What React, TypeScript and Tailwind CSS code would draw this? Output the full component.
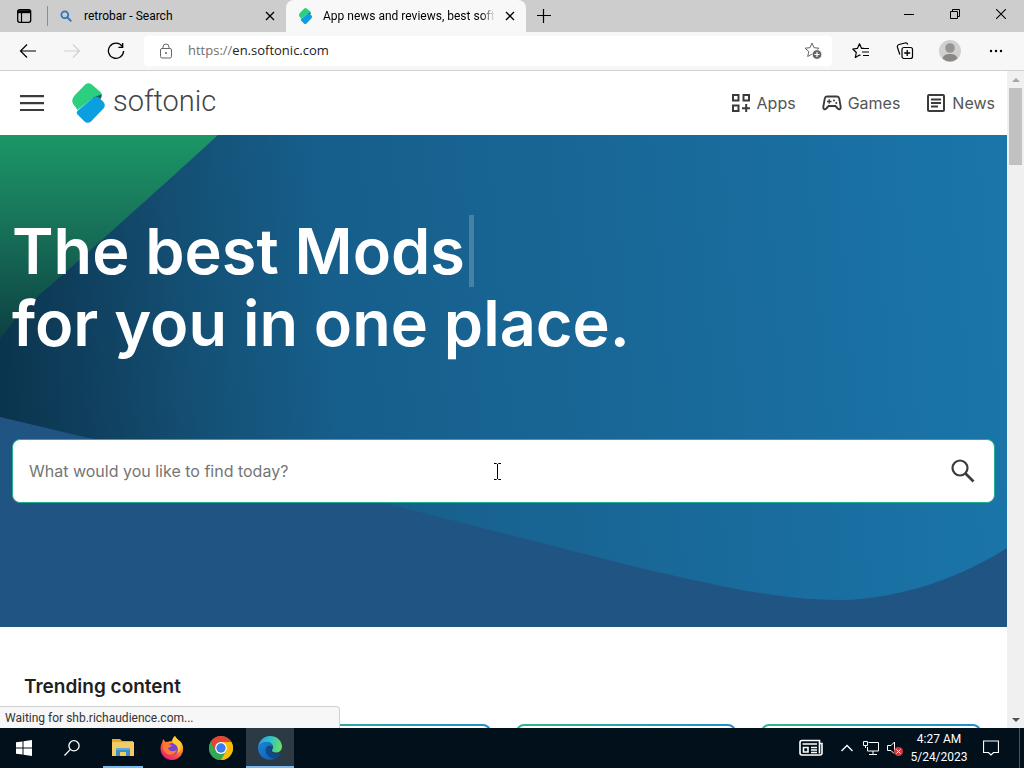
import type { ReactNode } from "react";

type IconProps = { children: ReactNode; w?: number; h?: number; className?: string };

function Icon({ children, w = 16, h = 16, className = "" }: IconProps) {
  return (
    <svg
      width={w}
      height={h}
      viewBox={`0 0 ${w} ${h}`}
      fill="none"
      stroke="currentColor"
      className={`block shrink-0 ${className}`}
      aria-hidden="true"
    >
      {children}
    </svg>
  );
}

function SoftonicMark({ w, h }: { w: number; h: number }) {
  return (
    <svg width={w} height={h} viewBox="0 0 33 40" className="block shrink-0" aria-hidden="true">
      <path d="M13.500 1.300Q16.500-.8 19.500 1.300L28.500 9Q30.500 11 29 13L22.500 14 5.500 27 1.500 21.500Q-1 18 1.300 14.500Q2 13 3.500 11.500Z" fill="#2bcf7d" />
      <path d="M21 14.500 29.700 11.200Q30.300 13.500 28 16.500L24 17.500Z" fill="#17645b" />
      <path d="M21.500 14.500Q24.500 12.800 27.500 15L31.500 19Q34 22 31.500 25.500L19 38.500Q15.500 41 12.500 38.500L5.500 31.500Q4 29.500 5.500 27.700Z" fill="#0aa0e0" />
    </svg>
  );
}

function TabClose({ label }: { label: string }) {
  return (
    <button type="button" aria-label={label} className="flex h-6 w-6 shrink-0 items-center justify-center">
      <Icon w={10} h={10}>
        <path d="M1 1 9 9M9 1 1 9" strokeWidth="1.300" />
      </Icon>
    </button>
  );
}

function TabStrip() {
  return (
    <div className="flex h-8 shrink-0 items-stretch bg-[#cdcdcd] font-['Roboto','Open_Sans',sans-serif] text-black">
      <button type="button" aria-label="Tab actions" className="flex w-[47px] items-center justify-center">
        <Icon>
          <rect x="1.700" y="1.700" width="13" height="12.600" rx="2" strokeWidth="1.300" />
          <path d="M1.700 3.700h13" strokeWidth="3" />
          <path d="M5.500 5v9" strokeWidth="1.200" />
        </Icon>
      </button>
      <div className="my-1.5 w-px bg-[#8c8c8c]" />
      <div className="flex w-[238px] items-center pl-3">
        <button type="button" className="flex min-w-0 flex-1 items-center gap-3">
          <Icon w={12} h={12} className="text-[#2f74c0]">
            <circle cx="4.800" cy="4.800" r="3.400" strokeWidth="1.800" />
            <path d="m7.500 7.500 3.800 3.800" strokeWidth="1.900" />
          </Icon>
          <span className="truncate text-[12px]">retrobar - Search</span>
        </button>
        <TabClose label="Close retrobar tab" />
        <div className="w-1" />
      </div>
      <div className="flex w-[240px] items-center rounded-t-lg bg-[#f8f8f8] pl-3">
        <button type="button" className="flex min-w-0 flex-1 items-center gap-2.5">
          <SoftonicMark w={15} h={16} />
          <span className="text-left text-[12px] whitespace-nowrap [mask-image:linear-gradient(to_right,black_92%,transparent)]">
            App news and reviews, best soft
          </span>
        </button>
        <TabClose label="Close Softonic tab" />
        <div className="w-1" />
      </div>
      <button type="button" aria-label="New tab" className="flex w-9 items-center justify-center">
        <Icon>
          <path d="M1 7.500h14M7.500 1v14" strokeWidth="1.200" />
        </Icon>
      </button>
      <div className="flex-1" />
      <div className="flex pb-1">
        <button type="button" aria-label="Minimize" className="flex w-[46px] items-center justify-center">
          <Icon w={10} h={10}>
            <path d="M0 5.500h10" />
          </Icon>
        </button>
        <button type="button" aria-label="Restore" className="flex w-[46px] items-center justify-center">
          <Icon w={10} h={10}>
            <path d="M.5 2.500h7v7h-7zM2.500 2.500v-2h7v7h-2" />
          </Icon>
        </button>
        <button type="button" aria-label="Close window" className="flex w-[46px] items-center justify-center">
          <Icon w={10} h={10}>
            <path d="m0 0 10 10M10 0 0 10" strokeWidth="1.100" />
          </Icon>
        </button>
      </div>
    </div>
  );
}

const STAR = "m8 1 2 4.700 5 .5-3.800 3.300 1.100 5L8 12l-4.300 2.500 1.100-5L1 6.200l5-.5z";

function Toolbar() {
  return (
    <div className="flex h-[39px] shrink-0 items-center border-b border-[#d0d0d0] bg-[#f7f7f7] text-black">
      <div className="flex pl-1.5">
        <button type="button" aria-label="Back" className="flex h-8 w-11 items-center justify-center">
          <Icon w={18} h={16}>
            <path d="M17 8H1.500M8 1.500 1.500 8 8 14.500" strokeWidth="1.200" />
          </Icon>
        </button>
        <button type="button" aria-label="Forward" className="flex h-8 w-11 items-center justify-center text-[#d0d0d0]">
          <Icon w={18} h={16}>
            <path d="M1 8h15.500M10 1.500 16.500 8 10 14.500" strokeWidth="1.200" />
          </Icon>
        </button>
        <button type="button" aria-label="Refresh" className="flex h-8 w-11 items-center justify-center">
          <Icon w={18} h={18}>
            <path d="M15.300 4.500A7.600 7.600 0 1 0 16.600 9M15.700 1v4.300h-4.300" strokeWidth="1.300" />
          </Icon>
        </button>
      </div>
      <div className="ml-1.5 flex h-[30px] min-w-0 flex-1 items-center rounded bg-white pr-2.5 pl-3.5">
        <Icon className="text-[#666]">
          <rect x="2.500" y="5.500" width="11" height="9.500" rx="1.500" />
          <path d="M5 5.500V4a3 3 0 0 1 6 0v1.500" />
          <circle cx="8" cy="10" r=".6" fill="currentColor" />
        </Icon>
        <label htmlFor="address" className="pl-3.5 text-[13px] text-[#707070]">
          https://
        </label>
        <input
          id="address"
          aria-label="Address"
          defaultValue="en.softonic.com"
          className="min-w-0 flex-1 bg-transparent text-[13px] text-[#222] outline-none"
        />
        <button type="button" aria-label="Add to favorites" className="text-[#666]">
          <Icon w={18} h={18}>
            <path d={STAR} />
            <circle cx="13" cy="12.500" r="4.800" fill="#666" stroke="white" strokeWidth=".8" />
            <path d="M10.500 12.500h5M13 10v5" stroke="white" strokeWidth="1.200" />
          </Icon>
        </button>
      </div>
      <div className="flex pr-[5px] pl-[7px]">
        <button type="button" aria-label="Favorites" className="flex h-8 w-11 items-center justify-center">
          <Icon w={18} h={16}>
            <path d="M12 5.300 9.500 5.300 7.500.800 5.500 5.300.800 6l3.500 3.500-1 5L7.500 12l1 .5" strokeWidth="1.200" strokeLinejoin="round" />
            <path d="M11 5.500h6M10 9h7M11 12.500h6" strokeWidth="1.200" />
          </Icon>
        </button>
        <button type="button" aria-label="Collections" className="flex h-8 w-11 items-center justify-center">
          <Icon w={18} h={18}>
            <rect x="6" y="5.500" width="10.500" height="11" rx="2" strokeWidth="1.200" />
            <path d="M3.800 12.500 1.500 5.500C1 3.800 1.500 3 3 2.500L9 1c1.500-.4 2.300 0 2.800 1.500" strokeWidth="1.200" />
            <path d="M11.200 8v6M8.200 11h6" strokeWidth="1.300" />
          </Icon>
        </button>
        <button type="button" aria-label="Profile" className="flex h-8 w-[46px] items-center justify-center">
          <svg width="22" height="22" viewBox="0 0 22 22" aria-hidden="true">
            <circle cx="11" cy="11" r="11" fill="#d2d0ce" />
            <circle cx="11" cy="8" r="4.800" fill="#979593" />
            <path d="M3.500 18.500C4.500 15 7 14 11 14s6.500 1 7.500 4.500A11 11 0 0 1 3.500 18.500Z" fill="#8a8886" />
          </svg>
        </button>
        <button type="button" aria-label="Settings and more" className="flex h-8 w-[46px] items-center justify-center">
          <Icon w={14} h={4}>
            <g fill="currentColor" stroke="none">
              <circle cx="2" cy="2" r="1.200" />
              <circle cx="7" cy="2" r="1.200" />
              <circle cx="12" cy="2" r="1.200" />
            </g>
          </Icon>
        </button>
      </div>
    </div>
  );
}

function SiteHeader() {
  return (
    <header className="flex h-16 items-center bg-white px-3 font-['Inter',sans-serif] text-[16px] text-[#555]">
      <button type="button" aria-label="Menu" className="flex h-10 w-10 items-center justify-center text-[#3b3b3b]">
        <Icon w={24} h={16}>
          <path d="M0 0h24v2.200H0zM0 7h24v2.200H0zM0 14h24v2H0z" fill="currentColor" stroke="none" />
        </Icon>
      </button>
      <a href="#home" className="ml-5 flex items-center gap-2 text-[#444]">
        <SoftonicMark w={33} h={40} />
        <span className="pb-1 font-['Roboto',sans-serif] text-[29px] leading-8 font-light">softonic</span>
      </a>
      <nav className="ml-auto flex items-center gap-[26px]">
        <a href="#apps" className="flex items-center gap-1.5">
          <Icon w={20} h={20} className="text-[#3b3b3b]">
            <path d="M2 2h5.500v5.500H2zM12.500 2H18v5.500h-5.500zM2 12.500h5.500V18H2zM15.200 11v8M11 15.200h8" strokeWidth="2" />
          </Icon>
          Apps
        </a>
        <a href="#games" className="flex items-center gap-1.5">
          <Icon w={20} h={20} className="text-[#3b3b3b]">
            <path d="M5 3.500h10c1.200 0 2 .7 2.200 1.800l1.500 8.500c.3 2.500-1.500 3.200-3 1.700L13.500 13h-7l-2.200 2.500c-1.500 1.500-3.300.8-3-1.700l1.500-8.500C3 4.200 3.800 3.500 5 3.500Z" strokeWidth="1.900" />
            <path d="M5 8.500h4.500M7.200 6.200v4.600" strokeWidth="1.300" />
            <circle cx="12" cy="7.500" r="1" fill="currentColor" stroke="none" />
            <circle cx="14.300" cy="10" r="1" fill="currentColor" stroke="none" />
          </Icon>
          Games
        </a>
        <a href="#news" className="flex items-center gap-1.5">
          <Icon w={20} h={20} className="text-[#3b3b3b]">
            <rect x="2" y="2" width="16" height="16" rx="1" strokeWidth="2" />
            <path d="M5 6.500h10M5 10h10M5 13.500h7" strokeWidth="1.800" />
          </Icon>
          News
        </a>
      </nav>
    </header>
  );
}

function Hero() {
  return (
    <section className="relative bg-[#205483] px-3 pt-20 pb-[124px]">
      <svg
        className="absolute inset-0 h-full w-full"
        viewBox="0 0 1007 492"
        preserveAspectRatio="none"
        aria-hidden="true"
      >
        <defs>
          <linearGradient id="hero-green" x1="0" y1="0" x2="0" y2="1">
            <stop offset="0" stopColor="#1c9766" />
            <stop offset=".4" stopColor="#18765a" />
            <stop offset="1" stopColor="#0d4043" />
          </linearGradient>
          <linearGradient id="hero-blue" gradientUnits="userSpaceOnUse" x1="0" y1="280" x2="1007" y2="200">
            <stop offset="0" stopColor="#0b344d" />
            <stop offset=".08" stopColor="#0f3e5c" />
            <stop offset=".2" stopColor="#145075" />
            <stop offset=".33" stopColor="#165e8b" />
            <stop offset=".55" stopColor="#186594" />
            <stop offset="1" stopColor="#1a75a9" />
          </linearGradient>
        </defs>
        <path d="M0 0H1007V413C950 449 890 464 842 465C770 465 700 446 640 433L380 367L80 301L0 282Z" fill="url(#hero-blue)" />
        <path d="M0 0H218C150 62 80 125 45 155Q18 178 0 204Z" fill="url(#hero-green)" />
      </svg>
      <h1 className="relative font-['Inter',sans-serif] text-[63px] leading-[72px] font-semibold text-white">
        <span className="flex items-center gap-1">
          The best Mods
          <span className="h-[72px] w-[5px] bg-white/20" />
        </span>
        <span className="block">for you in one place.</span>
      </h1>
      <form
        onSubmit={(e) => e.preventDefault()}
        className="relative mt-20 flex h-16 items-center rounded-lg border border-[#20b08b] bg-white pr-[15px] pl-4 font-['Inter',sans-serif]"
      >
        <input
          type="search"
          aria-label="Search"
          placeholder="What would you like to find today?"
          className="h-full min-w-0 flex-1 bg-transparent text-[16px] text-[#333] outline-none placeholder:text-[#757575]"
        />
        <button type="submit" aria-label="Search" className="flex h-8 w-8 items-center justify-center text-[#3b3b3b]">
          <Icon w={24} h={24}>
            <circle cx="9" cy="9" r="7.500" strokeWidth="2.200" />
            <path d="m14.500 14.500 8 8" strokeWidth="2.600" />
          </Icon>
        </button>
      </form>
    </section>
  );
}

function Trending() {
  return (
    <section className="bg-white pt-12">
      <h2 className="px-6 font-['Inter',sans-serif] text-[19px] leading-6 font-semibold text-[#1f1f1f]">
        Trending content
      </h2>
      <div className="mt-[25px] grid grid-cols-4 gap-[25px] px-[26px]">
        {["a", "b", "c", "d"].map((id) => (
          <div key={id} className="h-40 rounded-lg bg-linear-to-r from-[#31b789] to-[#218fc9] p-0.5">
            <div className="h-full rounded-md bg-white" />
          </div>
        ))}
      </div>
    </section>
  );
}

function ScrollTrack() {
  return (
    <div className="flex w-[17px] shrink-0 flex-col items-center bg-[#f0f0f0]">
      <button type="button" aria-label="Scroll up" className="flex h-[17px] w-full items-center justify-center text-[#a3a3a3]">
        <Icon w={8} h={4}>
          <path d="M0 4 4 0l4 4z" fill="currentColor" stroke="none" />
        </Icon>
      </button>
      <div className="h-[77px] w-[13px] bg-[#c1c1c1]" />
      <div className="flex-1" />
      <button type="button" aria-label="Scroll down" className="flex h-[17px] w-full items-center justify-center text-[#505050]">
        <Icon w={8} h={4}>
          <path d="m0 0 4 4 4-4z" fill="currentColor" stroke="none" />
        </Icon>
      </button>
    </div>
  );
}

function ExplorerLogo() {
  return (
    <svg width="22" height="20" viewBox="0 0 22 20" aria-hidden="true">
      <path d="M0 1h8l2 2h11v15H0z" fill="#e6a92b" />
      <path d="M0 4h22v14H0z" fill="#f3cb62" />
      <path d="M4 10h14v8h-4v-4H8v4H4z" fill="#3b8fc9" />
      <path d="M4 10h14v2H4z" fill="#5aaae0" />
    </svg>
  );
}

function FirefoxLogo() {
  return (
    <svg width="24" height="24" viewBox="0 0 24 24" aria-hidden="true">
      <defs>
        <linearGradient id="fx" x1=".85" y1="0" x2=".2" y2="1">
          <stop offset="0" stopColor="#fff04a" />
          <stop offset=".35" stopColor="#ff9a28" />
          <stop offset=".65" stopColor="#ff4b45" />
          <stop offset="1" stopColor="#e31587" />
        </linearGradient>
      </defs>
      <path d="M15 0c.8 3 6 4.500 7.500 9 2.500 7.500-3 15-10.500 15S-.5 17.500.7 10.500C1 8.500 2 7 2.500 5.500L3 3l2.500 3 3-.3C10 5 11 5.200 11.500 5.500 12 3.500 13.500 1 15 0Z" fill="url(#fx)" />
      <circle cx="12" cy="13" r="6" fill="#7542d3" />
      <path d="M3 9c4-2.500 6-.5 9 .5-1 2-4 1.500-4 3 1.500 3 6 3.500 9 1-1 5-6 6.500-9.500 4.500C3.500 16 2.500 12 3 9Z" fill="#ff7a2d" />
      <path d="M15 0c.8 3 6 4.500 7 9l-1.500-1c1 5-.500 8-3 9 1.500-5-.5-8-4-9.500C12 5 13 1.500 15 0Z" fill="#ffcb35" />
    </svg>
  );
}

function ChromeLogo() {
  return (
    <svg width="24" height="24" viewBox="0 0 24 24" aria-hidden="true">
      <circle cx="12" cy="12" r="12" fill="#34a853" />
      <path d="M22.400 6H12V12L17.200 15 12 24A12 12 0 0 0 22.400 6Z" fill="#fbbc05" />
      <path d="M1.600 6 6.800 15A6 6 0 0 0 12 18L12 24A12 12 0 0 1 1.600 6Z" fill="#34a853" />
      <path d="M1.600 6A12 12 0 0 1 22.400 6H12A6 6 0 0 0 6.800 15Z" fill="#ea4335" />
      <circle cx="12" cy="12" r="5.900" fill="white" />
      <circle cx="12" cy="12" r="4.700" fill="#3c7cf0" />
    </svg>
  );
}

function EdgeLogo() {
  return (
    <svg width="24" height="24" viewBox="0 0 24 24" aria-hidden="true">
      <defs>
        <linearGradient id="edge-top" x1="0" y1=".4" x2="1" y2=".5">
          <stop offset="0" stopColor="#249fe5" />
          <stop offset=".5" stopColor="#2fc2c8" />
          <stop offset="1" stopColor="#6be15c" />
        </linearGradient>
        <linearGradient id="edge-low" x1="0" y1="0" x2="1" y2="1">
          <stop offset="0" stopColor="#1b86dc" />
          <stop offset="1" stopColor="#1059a8" />
        </linearGradient>
      </defs>
      <path d="M0 12C.5 5 5.500 0 12 0c7 0 12 5 12 10.500 0 4-3 6-6 6-2.500 0-4-1-4-2s1-1.500 1-3.500C15 8 12 6 8.500 6 4.500 6 1.500 8.500 0 12Z" fill="url(#edge-top)" />
      <path d="M0 12C1.500 8.500 4.500 6 8.500 6c3.500 0 6 2 6.500 4.500-5-2.500-8 1-7 5 1 4.500 5.500 7.500 10 6.500-7 4.500-17.500.5-18-10Z" fill="url(#edge-low)" />
      <path d="M15 10.500C10.500 8 7 11.500 8 15.500c1 4.500 6 7.500 10.500 6.200 1.800-.7 3.500-2.200 4.500-4 .3-.6-.2-.8-.7-.6-4.300 2-9.300.4-9.300-4.100 0-1.200.8-2 2-2.500Z" fill="#114a8b" />
    </svg>
  );
}

function Taskbar() {
  return (
    <footer className="flex h-10 shrink-0 items-stretch bg-[#01101b] font-['Roboto','Open_Sans',sans-serif] text-white">
      <button type="button" aria-label="Start" className="flex w-12 items-center justify-center">
        <svg width="16" height="16" viewBox="0 0 16 16" fill="white" aria-hidden="true">
          <path d="M0 2.300 6.500 1.400V7.500H0zM7.500 1.200 16 0V7.500H7.500zM0 8.500H6.500V14.600L0 13.700zM7.500 8.500H16V16L7.500 14.800z" />
        </svg>
      </button>
      <button type="button" aria-label="Search Windows" className="flex w-12 items-center justify-center">
        <Icon>
          <circle cx="10" cy="5.800" r="5.100" strokeWidth="1.300" />
          <path d="M6.400 9.400.5 15.500" strokeWidth="1.300" />
        </Icon>
      </button>
      <div className="ml-[3px] flex gap-px">
        <button type="button" aria-label="File Explorer" className="flex w-12 flex-col items-center">
          <span className="flex flex-1 items-center pt-0.5">
            <ExplorerLogo />
          </span>
          <span className="h-0.5 w-10 bg-[#76b9ed]" />
        </button>
        <button type="button" aria-label="Firefox" className="flex w-12 items-center justify-center">
          <FirefoxLogo />
        </button>
        <button type="button" aria-label="Chrome" className="flex w-12 items-center justify-center">
          <ChromeLogo />
        </button>
        <button type="button" aria-label="Edge" className="flex w-12 flex-col items-center bg-[#2b3a45]">
          <span className="flex flex-1 items-center pt-0.5">
            <EdgeLogo />
          </span>
          <span className="h-0.5 w-full bg-[#76b9ed]" />
        </button>
      </div>
      <div className="flex-1" />
      <div className="flex items-center">
        <button type="button" aria-label="News and interests" className="mr-[11px] flex">
          <Icon w={26} h={18}>
            <path d="M4 1.500h17.500v3H24v9.500q0 2-2 2H4q-2 0-2-2v-10.500q0-2 2-2ZM21.500 4.500v10" strokeWidth="1.600" />
            <path d="M4.500 5h14.500M13 8.500h6M13 11h6M13 13.500h6" strokeWidth="1.400" />
            <path d="M5.500 8.500h4.500v4.500H5.500z" strokeWidth="1.600" />
          </Icon>
        </button>
        <button type="button" aria-label="Show hidden icons" className="flex w-6 justify-center">
          <Icon w={12} h={8}>
            <path d="m.5 7 5.500-5.500L11.500 7" strokeWidth="1.300" />
          </Icon>
        </button>
        <button type="button" aria-label="Network" className="flex w-6 justify-center">
          <Icon>
            <path d="M5.500 2.500h10v8.500h-11V7M10 11v3M6 14.500h8M.5 1.500h4v4h-4zM2.500 5.500V8" />
          </Icon>
        </button>
        <button type="button" aria-label="Volume muted" className="flex w-6 justify-center">
          <Icon>
            <path d="M7.500 12V2L4 5.500H.5v5H4l3 3" />
            <circle cx="11.500" cy="11.500" r="4.500" fill="#d33a3a" stroke="none" />
            <path d="m9.500 9.500 4 4M13.500 9.500l-4 4" />
          </Icon>
        </button>
        <div className="mr-0.5 flex w-16 flex-col items-center text-[12px] leading-[18px]">
          <span>4:27 AM</span>
          <span>5/24/2023</span>
        </div>
        <button type="button" aria-label="Notifications" className="flex w-9 justify-center">
          <Icon>
            <path d="M.5 1h15v11.500h-5L8 15l-2.500-2.500h-5z" strokeWidth="1.200" />
          </Icon>
        </button>
        <button type="button" aria-label="Show desktop" className="ml-2.5 h-10 w-[5px] border-l border-[#4b555c]" />
      </div>
    </footer>
  );
}

export default function App() {
  return (
    <div className="flex h-screen flex-col overflow-hidden bg-white font-['Open_Sans','Noto_Sans',sans-serif]">
      <TabStrip />
      <Toolbar />
      <div className="relative flex min-h-0 flex-1">
        <main className="min-w-0 flex-1 overflow-hidden">
          <SiteHeader />
          <Hero />
          <Trending />
        </main>
        <ScrollTrack />
        <div className="absolute bottom-0 left-0 h-[22px] w-[340px] rounded-tr border-t border-r border-[#d0d0d0] bg-[#f7f7f7] pl-[5px] font-['Roboto','Open_Sans',sans-serif] text-[12px] leading-[22px] text-[#333]">
          Waiting for shb.richaudience.com...
        </div>
        <Icon w={9} h={17} className="absolute top-[392px] left-[493px] text-black">
          <path d="M1 .5h2.500l1 1 1-1H8M4.500 1v15M1 16.500h2.500l1-1 1 1H8" />
        </Icon>
      </div>
      <Taskbar />
    </div>
  );
}
